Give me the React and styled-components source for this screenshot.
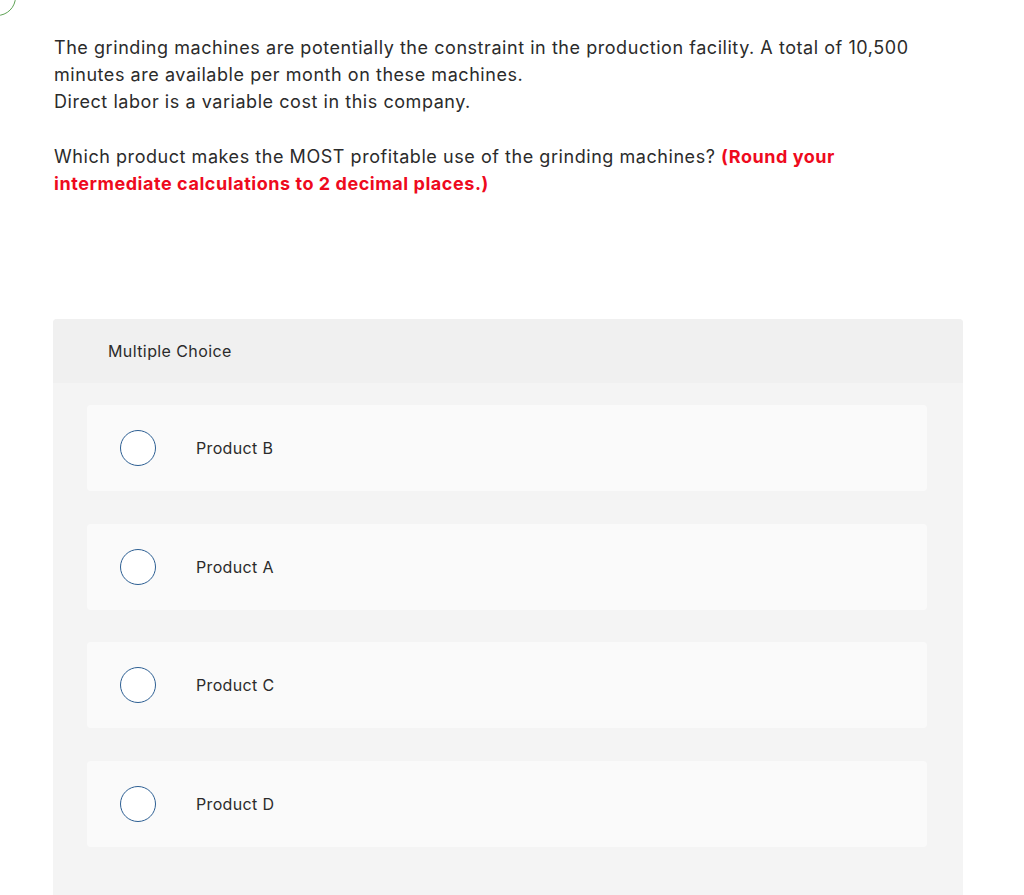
import React from "react";
import styled, { createGlobalStyle } from "styled-components";

const GlobalStyle = createGlobalStyle`
  body {
    margin: 0;
    background: #ffffff;
    font-family: Inter, "Open Sans", sans-serif;
    color: #2b2b2b;
  }
`;

const Page = styled.div`
  position: relative;
  width: 1024px;
  height: 895px;
  overflow: hidden;
  padding: 34px 61px 0 53px;
  box-sizing: border-box;
`;

const StatusMark = styled.div`
  position: absolute;
  left: -22px;
  top: -22px;
  width: 36px;
  height: 36px;
  border: 1.5px solid #5ea255;
  border-radius: 50%;
`;

const Paragraph = styled.p`
  margin: 0 0 0 1px;
  max-width: 895px;
  font-size: 18px;
  line-height: 27px;
  letter-spacing: 0.55px;
  color: #2b2b2b;
`;

const Question = styled(Paragraph)`
  margin-top: 28px;
  margin-bottom: 122px;
`;

const Hint = styled.strong`
  color: #ee0a1d;
  font-weight: 700;
`;

const Panel = styled.section`
  background: #f4f4f4;
  border-radius: 4px;
  overflow: hidden;
  padding-bottom: 60px;
`;

const PanelHeader = styled.div`
  background: #f0f0f0;
  height: 64px;
  display: flex;
  align-items: center;
  padding-left: 55px;
  font-size: 16px;
  letter-spacing: 0.4px;
  color: #2b2b2b;
`;

const Options = styled.div`
  display: flex;
  flex-direction: column;
  gap: 32.7px;
  padding: 22px 36px 0 34px;
`;

const Option = styled.label`
  display: flex;
  align-items: center;
  height: 86px;
  background: #fafafa;
  border-radius: 4px;
  padding-left: 33px;
  cursor: pointer;
`;

const Radio = styled.span`
  box-sizing: border-box;
  width: 36px;
  height: 36px;
  border: 1.5px solid #2d5f93;
  border-radius: 50%;
  background: #ffffff;
  flex-shrink: 0;
`;

const OptionText = styled.span`
  margin-left: 40px;
  font-size: 16px;
  letter-spacing: 0.35px;
  color: #2b2b2b;
`;

const choices = ["Product B", "Product A", "Product C", "Product D"];

export default function App() {
  return (
    <>
      <GlobalStyle />
      <Page>
        <StatusMark />
        <Paragraph>
          The grinding machines are potentially the constraint in the production facility. A total of 10,500
          minutes are available per month on these machines.
          <br />
          Direct labor is a variable cost in this company.
        </Paragraph>
        <Question>
          Which product makes the MOST profitable use of the grinding machines?{" "}
          <Hint>(Round your intermediate calculations to 2 decimal places.)</Hint>
        </Question>
        <Panel>
          <PanelHeader>Multiple Choice</PanelHeader>
          <Options>
            {choices.map((c) => (
              <Option key={c}>
                <Radio />
                <OptionText>{c}</OptionText>
              </Option>
            ))}
          </Options>
        </Panel>
      </Page>
    </>
  );
}
